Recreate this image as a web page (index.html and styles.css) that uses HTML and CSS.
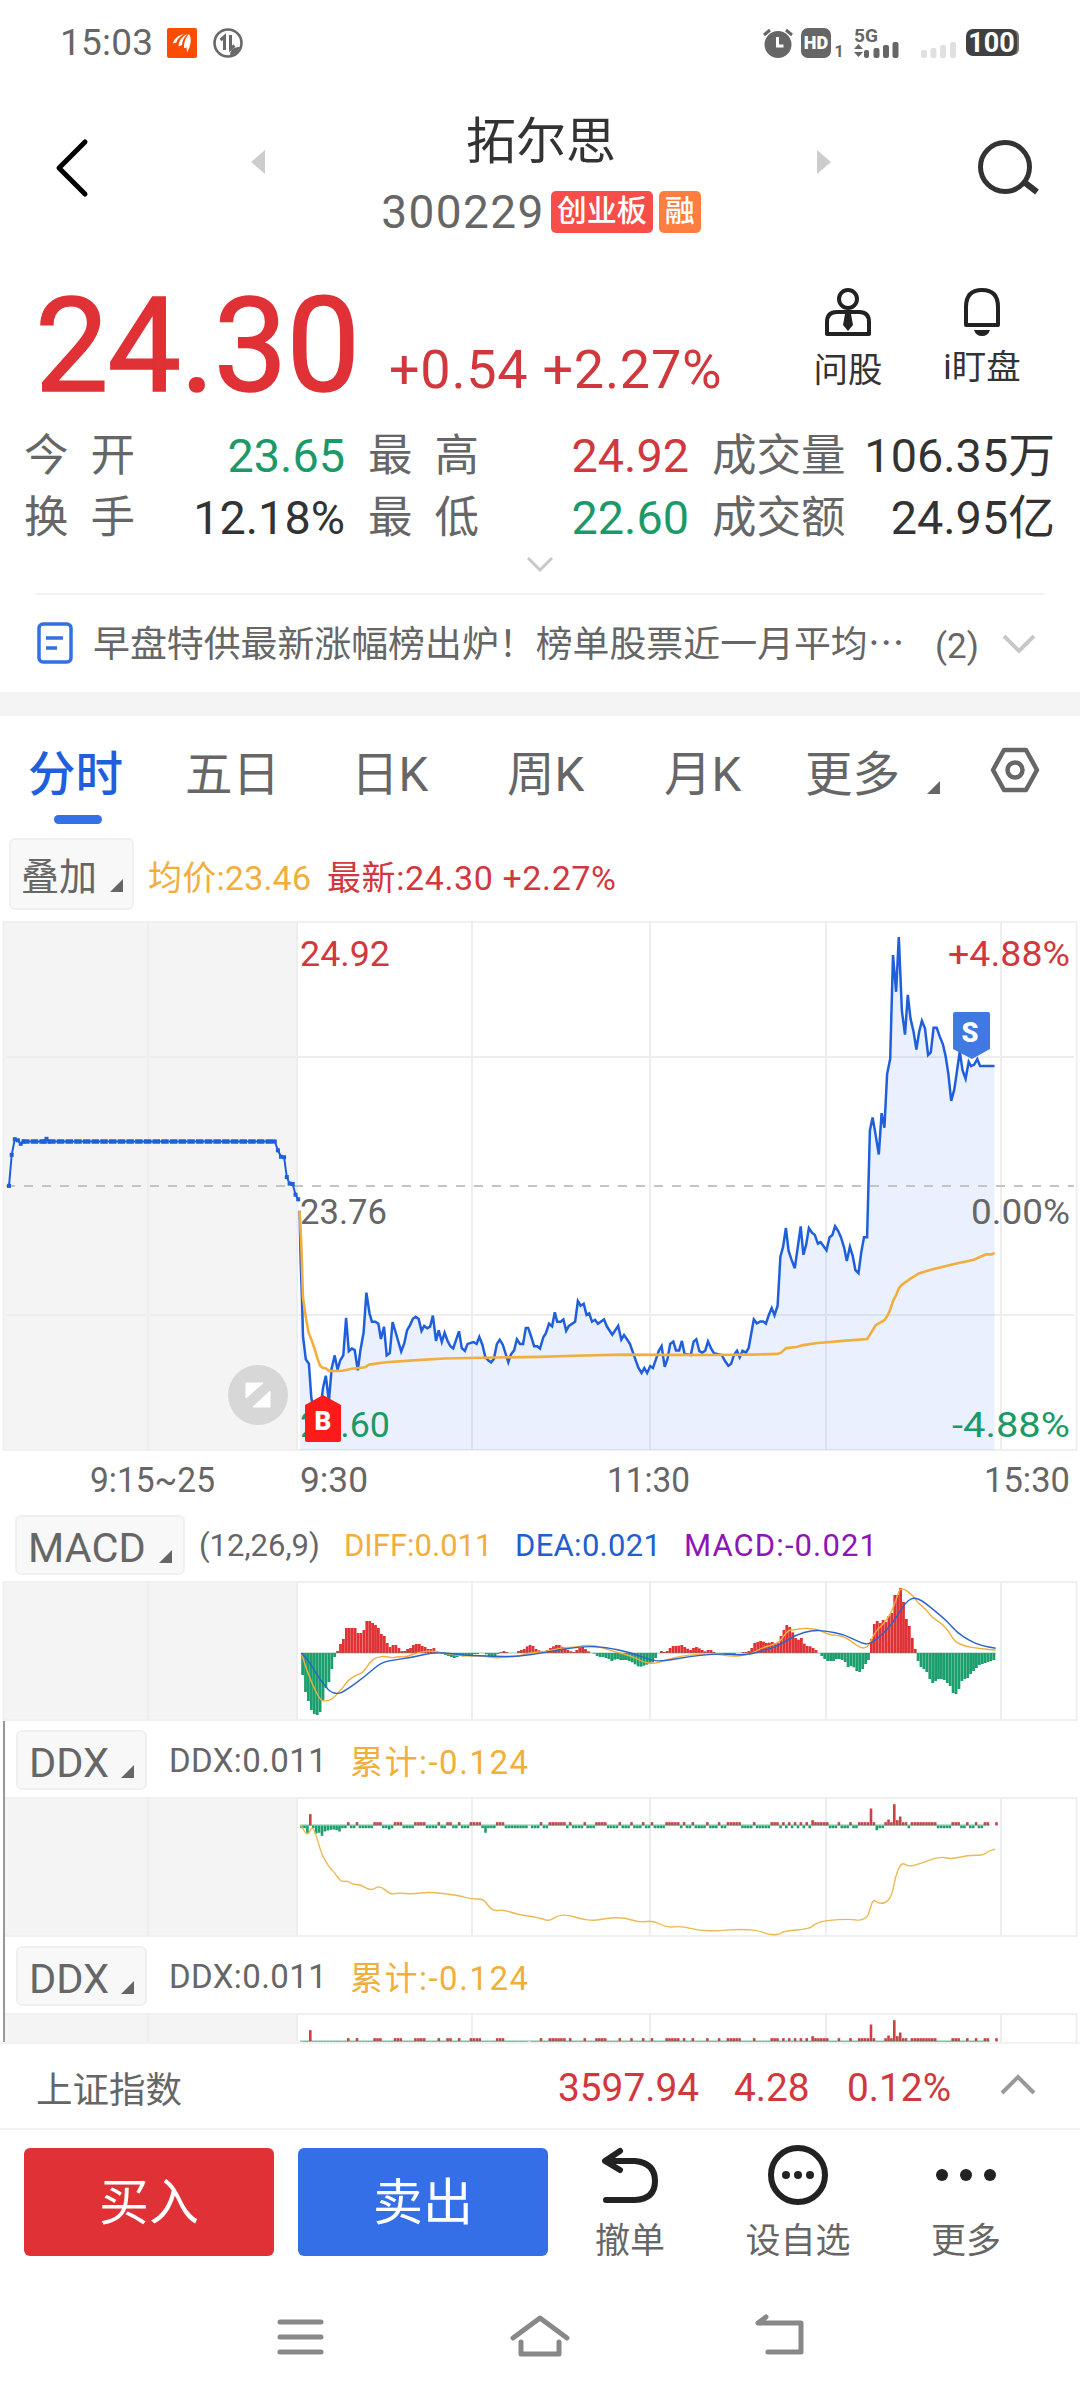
FILE: index.html
```html
<!DOCTYPE html>
<html lang="zh-CN">
<head>
<meta charset="UTF-8">
<title>拓尔思 300229</title>
<link rel="stylesheet" href="styles.css">
</head>
<body>

<div class="status">
  <span class="time">15:03</span>
  <svg class="app" width="30" height="30" viewBox="0 0 30 30"><rect width="30" height="30" rx="2" fill="#fc4c02"/><path d="M6 15.500c1-5 5-8 11-9.500-4 3-7 5-7.500 8.500zM11.500 18.500c0-5 3-10 9-12.500-4 4-5 7-5.500 11zM17 20c0-5 1-10 5-14 3 4 2 12-2 18.500l-.5-5z" fill="#fff"/></svg>
  <svg width="30" height="30" viewBox="0 0 30 30" fill="none" stroke="#686868"><circle cx="15" cy="15" r="13.500" stroke-width="2.600"/><path d="M7.500 12l4-3.500V22M17.500 7v14l4-3.500" stroke-width="3"/><path d="M17 26c1-5 4-7 10-7l-3 5-6 4z" fill="#686868" stroke="none"/></svg>
  <div class="status-r">
    <svg width="30" height="30" viewBox="0 0 30 30"><circle cx="15" cy="16.500" r="13.500" fill="#666"/><path d="M1 7l6-5M29 7l-6-5" stroke="#666" stroke-width="3"/><path d="M14.500 9v9h6" fill="none" stroke="#fff" stroke-width="3"/></svg>
    <span class="hd">HD</span><span class="sim">1</span>
    <svg class="sig" width="46" height="30" viewBox="0 0 46 30" fill="#666"><text x="0" y="14" font-size="19" textLength="24" lengthAdjust="spacingAndGlyphs" font-weight="700">5G</text><path d="M0 21l4.500-5 4.500 5zM0 24l4.500 5 4.500-5z"/><rect x="10" y="22" width="5" height="8" rx="2"/><rect x="19.500" y="20" width="6" height="10" rx="2"/><rect x="29" y="17" width="6" height="13" rx="2"/><rect x="38.500" y="14" width="6" height="16" rx="2"/></svg>
    <svg class="sig2" width="36" height="30" viewBox="0 0 36 30" fill="#e0e0e0"><rect y="22" width="6" height="8" rx="2"/><rect x="9.500" y="20" width="6" height="10" rx="2"/><rect x="19" y="17" width="6" height="13" rx="2"/><rect x="29" y="14" width="6" height="16" rx="2"/></svg>
    <span class="bat">100</span>
  </div>
</div>

<div class="header">
  <svg class="back" width="40" height="60" viewBox="0 0 40 60"><path d="M34 4L8 30l26 26" fill="none" stroke="#000" stroke-width="5" stroke-linecap="round" stroke-linejoin="round"/></svg>
  <i class="tri left"></i>
  <div class="name">
    <h1>拓尔思</h1>
    <div class="code">300229<b class="tag red">创业板</b><b class="tag orange">融</b></div>
  </div>
  <i class="tri right"></i>
  <svg class="search" width="62" height="58" viewBox="0 0 62 58" fill="none" stroke="#333" stroke-width="5"><circle cx="27" cy="28" r="24.500"/><path d="M46 43l13 10" stroke-width="6"/></svg>
</div>

<div class="quote">
  <span class="price">24.30</span>
  <span class="change">+0.54 +2.27%</span>
  <div class="tool ask">
    <svg width="48" height="50" viewBox="0 0 48 50" fill="none" stroke="#222" stroke-width="4"><circle cx="24" cy="12" r="9"/><path d="M3 47V35q0-10 10-10h22q10 0 10 10v12z" stroke-linejoin="round"/><path d="M21 27h6l2 11-5 6-5-6z" fill="#222" stroke="none"/></svg>
    <span>问股</span>
  </div>
  <div class="tool watch">
    <svg width="40" height="50" viewBox="0 0 40 50" fill="none" stroke="#222" stroke-width="4"><path d="M4 38V20C4 8 10 3 20 3s16 5 16 17v18z" stroke-linejoin="round"/><path d="M12 43h16q-2 6-8 6t-8-6z" fill="#222" stroke="none"/></svg>
    <span>i盯盘</span>
  </div>
</div>

<div class="stats">
  <div><label class="wide">今开</label><span class="down">23.65</span></div>
  <div><label class="wide">最高</label><span class="up">24.92</span></div>
  <div><label>成交量</label><span>106.35万</span></div>
  <div><label class="wide">换手</label><span>12.18%</span></div>
  <div><label class="wide">最低</label><span class="down">22.60</span></div>
  <div><label>成交额</label><span>24.95亿</span></div>
</div>
<svg class="expand" width="28" height="18" viewBox="0 0 28 18"><path d="M2 2l12 12L26 2" fill="none" stroke="#c8c8c8" stroke-width="3"/></svg>

<div class="notice">
  <svg width="36" height="42" viewBox="0 0 36 42" fill="none" stroke="#3470e0" stroke-width="3.500"><rect x="2" y="2" width="32" height="38" rx="4"/><path d="M9 16h17M9 26h11"/></svg>
  <span class="news">早盘特供最新涨幅榜出炉！榜单股票近一月平均⋯</span>
  <span class="count">(2)</span>
  <svg width="34" height="22" viewBox="0 0 34 22"><path d="M2 3l15 15L32 3" fill="none" stroke="#c8c8c8" stroke-width="4"/></svg>
</div>

<div class="tabs">
  <span class="active">分时</span>
  <span>五日</span>
  <span>日K</span>
  <span>周K</span>
  <span>月K</span>
  <span>更多</span>
  <i class="corner"></i>
  <svg width="50" height="46" viewBox="0 0 50 46" fill="none" stroke="#666" stroke-width="4.500"><path d="M14 3h22l11 20-11 20H14L3 23z" stroke-linejoin="round"/><circle cx="25" cy="23" r="7.500"/></svg>
</div>

<div class="legend main-legend">
  <button>叠加<i class="corner"></i></button>
  <span class="yellow">均价:23.46</span>
  <span class="up">最新:24.30 +2.27%</span>
</div>
<svg id="price" class="chart" width="1080" height="597" viewBox="0 11 1080 597"></svg>

<div class="legend macd-legend">
  <button>MACD<i class="corner"></i></button>
  <span>(12,26,9)</span>
  <span class="yellow">DIFF:0.011</span>
  <span class="blue">DEA:0.021</span>
  <span class="purple">MACD:-0.021</span>
</div>
<svg id="macd" class="chart" width="1080" height="142" viewBox="0 0 1080 142"></svg>

<div class="ddx-panels">
  <div class="legend ddx-legend">
    <button>DDX<i class="corner"></i></button>
    <span>DDX:0.011</span>
    <span class="yellow">累计:-0.124</span>
  </div>
  <svg class="chart ddx" width="1080" height="142" viewBox="0 0 1080 142"></svg>
  <div class="legend ddx-legend">
    <button>DDX<i class="corner"></i></button>
    <span>DDX:0.011</span>
    <span class="yellow">累计:-0.124</span>
  </div>
  <svg class="chart ddx" width="1080" height="142" viewBox="0 0 1080 142"></svg>
</div>

<div class="index">
  <span class="index-name">上证指数</span>
  <span class="up">3597.94</span>
  <span class="up">4.28</span>
  <span class="up">0.12%</span>
  <svg width="36" height="22" viewBox="0 0 36 22"><path d="M2 20L18 4l16 16" fill="none" stroke="#999" stroke-width="4"/></svg>
</div>

<div class="actions">
  <button class="buy">买入</button>
  <button class="sell">卖出</button>
  <div class="act">
    <svg width="62" height="62" viewBox="0 0 62 62" fill="none" stroke="#222" stroke-width="6" stroke-linecap="round" stroke-linejoin="round"><path d="M21 7L6 17l15 9M7 17h29q20 2 20 20T36 56H7"/></svg>
    <span>撤单</span>
  </div>
  <div class="act">
    <svg width="62" height="62" viewBox="0 0 62 62"><circle cx="31" cy="31" r="27" fill="none" stroke="#222" stroke-width="6"/><g fill="#222"><circle cx="19" cy="31" r="4"/><circle cx="31" cy="31" r="4"/><circle cx="43" cy="31" r="4"/></g></svg>
    <span>设自选</span>
  </div>
  <div class="act">
    <svg width="62" height="62" viewBox="0 0 62 62" fill="#222"><circle cx="7" cy="31" r="6"/><circle cx="31" cy="31" r="6"/><circle cx="55" cy="31" r="6"/></svg>
    <span>更多</span>
  </div>
</div>

<div class="nav">
  <svg width="60" height="46" viewBox="0 0 60 46" stroke="#888" stroke-width="5" stroke-linecap="round"><path d="M10 8h41M10 23h41M10 38h41"/></svg>
  <svg width="60" height="46" viewBox="0 0 60 46" fill="none" stroke="#888" stroke-width="5" stroke-linecap="round" stroke-linejoin="round"><path d="M3 24L30 4l27 20M11 28v12h38V28"/></svg>
  <svg width="60" height="46" viewBox="0 0 60 46" fill="none" stroke="#888" stroke-width="5" stroke-linecap="round" stroke-linejoin="round"><path d="M16 3L8 9h43v29H18"/></svg>
</div>

<script src="chart.js"></script>
</body>
</html>
```
FILE: styles.css
```css
*{box-sizing:border-box}
body{margin:0;width:1080px;height:2400px;overflow:hidden;background:#fff;color:#666;font-family:Roboto,"Noto Sans CJK SC",sans-serif}
svg{display:block;flex:none}
h1,button{margin:0;font-family:inherit;font-weight:400}
.up{color:#d1383d}
.down{color:#1b9a68}
.yellow{color:#f2ae3d}
.blue{color:#1f5fd0}
.purple{color:#8c17b4}

.status{display:flex;align-items:center;height:85px;padding:0 63px 0 60px}
.time{width:107px;font-size:37px;letter-spacing:.2px}
.app{margin-right:16px}
.status-r{display:flex;align-items:center;margin-left:auto}
.hd{width:30px;height:30px;margin-left:8px;border-radius:7px;background:#666;color:#fff;font-size:18px;font-weight:900;line-height:30px;text-align:center}
.sim{align-self:flex-end;width:16px;font-size:16px;font-weight:700;line-height:12px;text-align:center}
.sig{margin-left:7px;overflow:visible}
.sig2{margin-left:21px}
.bat{width:51px;height:27px;margin-left:9px;border-radius:7px;background:#404040;box-shadow:3px 0 0 -1px #777;color:#fff;font-size:27px;font-weight:700;line-height:28px;text-align:center}

.header{display:flex;align-items:flex-start;height:165px}
.back{margin:53px 161px 0 51px}
.tri{width:14px;height:24px;margin-top:65px;border:solid transparent;border-width:12px 0}
.tri.left{margin-left:-1px;border-right:14px solid #ccc}
.tri.right{border-left:14px solid #ccc}
.name{flex:1;text-align:center}
.name h1{margin-top:19px;color:#333;font-size:50px;line-height:76px}
.code{display:flex;align-items:center;justify-content:center;height:64px;font-size:46px;letter-spacing:1.400px}
.tag{height:42px;margin-left:6px;padding:0 6px;border-radius:5px;color:#fff;font-size:30px;font-weight:500;letter-spacing:0;line-height:40px}
.red{background:#f84e49}
.orange{background:#fe7e42}
.search{margin:54px 40px 0 147px}

.quote{display:flex;height:168px}
.price{width:353px;padding-left:35px;color:#e03136;font-size:131px;letter-spacing:-1px;line-height:193px;-webkit-text-stroke:1.500px #e03136}
.change{width:424px;padding-left:36px;color:#d1383d;font-size:54px;letter-spacing:.7px;line-height:240px;white-space:nowrap}
.tool{display:flex;flex-direction:column;align-items:center;padding-top:37px;color:#333;font-size:34.500px;line-height:66px}
.tool.ask{width:142px}
.tool.watch{width:126px}
.tool.watch span{margin-top:-3px}

.stats{display:grid;grid-template-columns:321px 321px 343px;column-gap:23px;row-gap:1px;height:122px;margin-top:8px;padding-left:24px}
.stats div{display:flex;justify-content:space-between;height:60px;color:#333;font-size:46.800px;line-height:60px;white-space:nowrap}
.stats label{color:#666;font-size:44.500px}
.stats .wide{letter-spacing:22px}
.stats .up{color:#d1383d}
.stats .down{color:#1b9a68}
.expand{margin:8px auto 0}

.notice{display:flex;align-items:center;width:1010px;height:99px;margin:19px auto 0;border-top:2px solid #f2f2f2;font-size:36.900px}
.notice svg:first-child{margin:-2px 20px 0 2px}
.news{width:842px;padding-bottom:6px;white-space:nowrap}
.count{width:67px;padding-top:6px;font-size:35px}

.tabs{position:relative;display:flex;align-items:center;height:144px;padding:0 40px 12px 28px;border-top:24px solid #f4f4f4;font-size:47.500px}
.tabs span{width:157px;white-space:nowrap}
.tabs span:nth-child(2){width:166px}
.tabs span:nth-child(3){width:156px}
.tabs span:nth-child(5){width:141px}
.tabs span:nth-child(6){width:122px}
.tabs .active{color:#1f5fdb;font-weight:500}
.tabs .active::after{content:"";position:absolute;left:54px;top:99px;width:48px;height:9px;border-radius:5px;background:#3470e8}
.tabs svg{margin-left:auto}
.corner{width:0;height:0;border-left:13px solid transparent;border-bottom:13px solid #666}
.tabs .corner{margin-top:35px}

.legend{display:flex;align-items:center;white-space:nowrap;font-size:33px}
.legend button{display:flex;justify-content:space-between;align-items:center;height:60px;padding:4px 11px 0;border:2px solid #f0f0f0;border-radius:6px;background:#f8f8f8;color:#666;font-size:41.500px}
.legend .corner{margin-top:19px}
.main-legend{height:75px;padding-left:9px;font-size:34px}
.main-legend button{width:125px;height:72px;margin-right:14px;padding:0 9px 0 10px;font-size:38px}
.main-legend .corner{margin-top:24px}
.main-legend span{padding-top:4px;letter-spacing:.2px}
.main-legend span:nth-child(2){width:179px}
.main-legend .up{letter-spacing:.6px}
.macd-legend{height:72px;padding:2px 0 0 15px;font-size:31px}
.macd-legend button{width:170px;margin-right:14px}
.macd-legend span:nth-child(2){width:145px}
.macd-legend span:nth-child(3){width:171px}
.macd-legend span:nth-child(4){width:169px;letter-spacing:.3px}
.macd-legend .purple{letter-spacing:1.100px}
.ddx-legend{height:74px;padding:2px 0 0 11px}
.ddx-legend button{width:131px;margin-right:22px}
.ddx-legend span:nth-child(2){width:181px;letter-spacing:.4px}
.ddx-legend .yellow{letter-spacing:1.500px}

.chart text{font-size:35px}
.ddx-panels{height:324px;margin:-4px 0 0 3px;padding-top:4px;border-left:2px solid #999;overflow:hidden}
.ddx-panels .chart{margin-left:-5px}

.index{display:flex;align-items:center;height:88px;padding:0 44px 0 36px;border:solid #f2f2f2;border-width:2px 0;font-size:38.800px}
.index span{padding-top:2px}
.index-name{width:522px;font-size:36.500px}
.index .up:nth-child(2){width:176px}
.index .up:nth-child(3){width:113px}
.index svg{margin:-4px 0 0 auto}

.actions{display:flex;height:151px;padding:18px 0 0 24px}
.actions button{width:250px;height:108px;margin-right:24px;border:0;border-radius:6px;color:#fff;font-size:50px;line-height:108px}
.buy{background:#e03137}
.actions .sell{margin-right:-2px;background:#346fe8}
.act{display:flex;flex-direction:column;align-items:center;width:168px;margin-top:-4px;font-size:35px;line-height:62px}
.act span{margin-top:5px}

.nav{display:flex;justify-content:space-between;padding:33px 270px 0}
```
FILE: chart.js
```javascript
const RED='#e03136', GREEN='#1b9f6c', BLUE='#1f5fdb', YELLOW='#f2ae3d';
const cols=[148,297,472,650,826,1001];

const parse=s=>s.trim().split(/\s+/).map(p=>p.split(',').map(Number));
const line=(pts,color,w)=>`<polyline points="${pts.map(p=>p.join()).join(' ')}" fill="none" stroke="${color}" stroke-width="${w}"/>`;
// data points -> px
const fit=(s,sx,sy,dx=0,dy=0)=>parse(s).map(([x,y])=>[+(x/sx+dx).toFixed(1),+(y/sy+dy).toFixed(1)]);

function frame(top,bottom){
  let s=`<rect x="3" y="${top}" width="294" height="${bottom-top}" fill="#f4f4f4"/>`;
  s+=`<rect x="3.5" y="${top}" width="1073" height="${bottom-top}" fill="none" stroke="#f0f0f0" stroke-width="2"/>`;
  cols.forEach(x=>s+=`<path d="M${x} ${top}V${bottom}" stroke="#eee" stroke-width="2"/>`);
  return s;
}

/* ---- price ---- */
const PX=2.904, PY=2.613;
const auction=fit('26,747 34,666 43,625 52,628 60,637 68,631 126,631 135,624 143,631 798,631 807,654 816,671 825,672 833,724 841,741 850,742 858,770 866,782',PX,PY);
const price=fit(`870,812 873,940 877,1040 880,1140 888,1200 897,1212 904,1300 912,1340 920,1370 930,1340 938,1275 946,1243 955,1310 963,1225 972,1190 980,1227 988,1203 997,1190 1005,1092 1013,1179 1022,1172 1030,1176 1039,1229 1047,1175 1056,1130 1064,1026 1073,1080 1080,1102 1090,1102 1099,1107 1106,1147 1115,1115 1123,1190 1132,1184 1140,1103 1149,1130 1165,1180 1174,1158 1182,1125 1190,1112 1199,1094 1207,1089 1216,1095 1224,1126 1232,1113 1241,1119 1249,1115 1257,1086 1266,1152 1274,1124 1283,1155 1291,1131 1300,1153 1308,1166 1316,1172 1333,1127 1341,1171 1350,1178 1358,1160 1375,1155 1384,1160 1392,1142 1401,1162 1409,1193 1417,1202 1426,1208 1434,1200 1443,1160 1451,1149 1460,1162 1476,1208 1484,1187 1493,1177 1501,1148 1510,1160 1519,1160 1527,1118 1534,1118 1543,1142 1551,1166 1560,1166`,PX,PY)
.concat(fit(`0,1172 10,1142 17,1132 26,1107 35,1114 43,1077 50,1102 60,1102 68,1096 76,1126 84,1113 102,1102 110,1048 118,1060 127,1055 135,1084 143,1080 151,1102 160,1097 168,1107 186,1096 194,1114 210,1136 227,1113 236,1149 244,1137 252,1147 261,1160 278,1203 286,1223 295,1236 303,1223 311,1236 320,1218 328,1223 337,1200 345,1178 353,1166 362,1220 370,1200 378,1160 387,1154 395,1177 404,1177 412,1152 420,1186 438,1189 446,1154 454,1148 463,1179 471,1183 480,1177 488,1153 497,1172 505,1184 528,1189 538,1206 547,1217 555,1212 563,1189 572,1178 580,1195 588,1178 598,1183 606,1170 621,1096 630,1106 640,1101 648,1101 656,1107 665,1083 673,1066 681,1085 690,1060 698,932 706,906 714,857 722,917 731,941 740,962 748,910 757,853 765,927 773,900 781,857 790,869 798,875 807,898 815,894 832,915 841,881 849,875 857,852 866,865 874,882 883,908 891,943 900,906 908,930 916,967 925,975 933,920 941,881 950,881 958,602 966,568 975,615 984,665 992,557 1000,595 1008,455 1017,415 1025,144 1034,240 1042,97 1051,290 1060,352 1068,248 1076,310 1085,345 1093,391 1101,345 1109,316 1118,336 1127,405 1135,398 1143,334 1152,334 1161,357 1170,377 1178,408 1186,455 1194,525 1203,495 1210,452 1219,395 1227,445 1236,467 1245,423 1252,434 1261,430 1270,416 1278,434 1320,434`,PX,PY,540));
const avg=fit('870,812 875,900 880,1040 888,1090 896,1130 905,1150 912,1168 921,1195 929,1216 938,1223 947,1224 957,1231 995,1230 1022,1225 1060,1221 1072,1214 1120,1208 1200,1203 1290,1198 1400,1196 1568,1194',PX,PY)
.concat(fit('100,1191 240,1188 500,1189 620,1188 690,1186 700,1183 715,1171 745,1168 765,1163 800,1158 880,1152 950,1147 960,1133 975,1111 1000,1098 1010,1085 1017,1070 1026,1046 1034,1033 1042,1015 1051,1005 1075,990 1100,976 1135,966 1200,952 1260,940 1295,926 1312,926 1320,922',PX,PY,540));

const label=(x,y,t,c,w)=>`<text x="${x}" y="${y}" fill="${c}" textLength="${w}" lengthAdjust="spacingAndGlyphs">${t}</text>`;
let p=frame(22,550);
p+='<path d="M6 157H1074M6 415H1074" stroke="#eee" stroke-width="2"/>';
p+=`<polygon points="300,550 ${price.map(q=>q.join()).join(' ')} 994.5,550" fill="#346fe8" fill-opacity=".1"/>`;
p+='<path d="M6 286H1074" stroke="#c4c4c4" stroke-width="2" stroke-dasharray="9 9"/>';
p+=line(auction,BLUE,2)+`<path d="M22 241.500H275" stroke="${BLUE}" stroke-width="4.500" stroke-dasharray="7.500 1.200"/>`;
auction.forEach(([x,y])=>p+=`<rect x="${x-2}" y="${y-2}" width="4" height="4" fill="${BLUE}"/>`);
p+=label(300,66,'24.92','#d1383d',90)+label(948,66,'+4.88%','#d1383d',122);
p+=label(300,324,'23.76','#666',87)+label(971,324,'0.00%','#666',99);
p+=label(300,537,'22.60','#1b9a68',90)+label(952,537,'-4.88%','#1b9a68',118);
p+=line(price,BLUE,2.5)+line(avg,YELLOW,2.6);
p+=label(90,592,'9:15~25','#666',125)+label(300,592,'9:30','#666',68)+label(607,592,'11:30','#666',83)+label(984,592,'15:30','#666',86);
// full-screen toggle
p+='<circle cx="258" cy="495" r="30" fill="#d7d7d7"/><path d="M246 483h17l-17 15zM270 491v16h-17z" fill="#fff" stroke="#fff" stroke-linejoin="round"/>';
// trade markers
p+='<path d="M305 505l18-10 18 10v35q0 2-2 2h-32q-2 0-2-2z" fill="#fb1b1b"/>';
p+='<text x="323" y="530" text-anchor="middle" fill="#fff" font-weight="900" style="font-size:26px">B</text>';
p+='<path d="M953 114q0-2 2-2h33q2 0 2 2v35l-18 10-19-10z" fill="#4079e2"/>';
p+='<text x="970" y="142" text-anchor="middle" fill="#fff" font-weight="900" style="font-size:27px">S</text>';
document.getElementById('price').innerHTML=p;

/* ---- MACD ---- */
const hist=[-66,-117,-144,-171,-183,-186,-177,-141,-105,-87,-48,-12,6,27,42,75,75,75,75,60,60,69,96,96,90,84,75,57,51,30,18,24,24,15,6,6,12,15,24,27,27,21,18,12,12,15,4,3,-3,-6,-9,-12,-15,-12,-9,-10,-9,-9,-6,-3,-3,0,0,-4,-9,-12,-12,-3,3,6,3,0,0,0,6,9,12,20,24,21,12,8,3,6,9,15,20,24,24,19,15,9,5,3,9,15,18,12,5,0,-2,-9,-12,-12,-15,-18,-24,-20,-18,-21,-21,-21,-24,-28,-34,-40,-41,-38,-35,-32,-28,-15,0,6,3,6,15,21,21,22,24,18,13,9,15,18,14,9,5,9,9,3,0,0,0,-5,-6,-6,-5,0,0,3,3,6,15,30,33,36,34,30,31,33,30,30,51,69,84,78,62,45,40,45,28,21,20,15,9,0,-9,-18,-24,-24,-24,-18,-18,-21,-27,-42,-39,-43,-54,-57,-48,-33,-21,42,87,96,90,99,93,111,120,174,174,195,153,102,81,45,12,-24,-42,-48,-57,-78,-90,-84,-78,-78,-81,-90,-99,-120,-123,-108,-84,-78,-75,-63,-54,-45,-36,-33,-30,-27,-24,-21];
let m=frame(2,140);
hist.forEach((v,i)=>{
  const h=Math.abs(v)/3, x=(301.2+i*2.917).toFixed(1);
  if(v) m+=`<rect x="${x}" y="${v>0?73-h:73}" width="2.8" height="${h}" fill="${v>0?RED:GREEN}"/>`;
});
m+='<path d="M301 73H996" stroke="#1b9f6c" stroke-opacity=".5" stroke-width="1"/>';
const smooth=(pts,c)=>{
  let d=`M${pts[0]}`;
  for(let i=1;i<pts.length-1;i++){
    const [x,y]=pts[i],[a,b]=pts[i+1];
    d+=`Q${x},${y} ${(x+a)/2},${(y+b)/2}`;
  }
  return `<path d="${d}L${pts[pts.length-1]}" fill="none" stroke="${c}" stroke-width="1.4"/>`;
};
m+=smooth(fit('64,279 80,330 100,380 120,418 132,424 155,420 190,382 205,360 230,344 250,338 270,305 290,291 318,289 335,294 352,290 380,291 415,276 460,272 500,282 560,289 610,287 645,295 680,290 715,290 745,278 800,275 850,262 880,263 915,255 950,258 1000,274 1060,290 1090,307 1120,311 1150,303',3,3,280,-20)
.concat(fit('0,288 60,283 110,282 155,290 215,283 240,265 295,250 310,230 325,210 345,210 370,204 400,207 420,210 445,224 490,228 520,248 545,266 565,260 585,215 615,188 635,155 648,120 660,83 680,92 700,108 715,130 740,150 755,172 785,190 805,212 825,246 855,258 880,263 947,271',3,3,680,-20)),YELLOW);
m+=smooth(fit('64,279 85,300 105,335 125,365 150,396 175,402 195,392 250,354 295,314 320,303 400,292 460,277 520,281 560,286 640,289 710,290 800,277 850,267 920,259 975,262 1050,277 1110,300 1145,304',3,3,280,-20)
.concat(fit('0,295 60,285 130,281 170,285 220,282 300,256 345,225 400,210 440,214 490,223 540,247 565,254 590,238 635,195 665,145 685,120 703,113 725,121 765,153 800,182 830,217 870,243 905,257 947,265',3,3,680,-20)),'#2a64c8');
document.getElementById('macd').innerHTML=m;

/* ---- DDX ---- */
const ups=[[503,507],[515,519],[541,553],[571,582],[600,620],[637,641],[646,650],[654,658],[663,667],[684,688],[692,700],[722,733],[785,789],[797,822],[826,830],[848,852],[865,880],[899,903],[916,920],[932,936],[945,949],[968,985],[991,995],[1004,1008],[1024,1031],[1041,1045],[1054,1070],[1073,1077],[1094,1098],[1117,1125],[1128,1132],[1136,1140],[1145,1149],[1153,1157],[1162,1166],[1170,1174],[1179,1204],[1215,1219],[1232,1236],[1247,1270],[1286,1318],[1322,1362],[1381,1393],[1402,1408],[1415,1421],[1428,1435],[1444,1448]];
const tall={3:34,175:16,195:51,201:18,203:64,204:16,205:27,2:-22,5:-24,6:-22,7:-31,8:-18,9:-15,10:-13,11:-12,12:-14,13:-18,63:-22,30:-12,197:-14};
let d=frame(2,140);
for(let i=0;i<239;i++){
  const u=438+i*4.24;
  if((u>766&&u<771)||(u>1436&&u<1444)) continue;
  let v=ups.some(([a,b])=>u>=a-.2&&u<=b+.2)?10:-8;
  if(tall[i]) v=tall[i];
  const h=Math.abs(v)/3;
  d+=`<rect x="${(u/1.452-1.4).toFixed(1)}" y="${v>0?29.5-h:29.5}" width="2.6" height="${h.toFixed(1)}" fill="${v>0?'#cc4044':GREEN}"/>`;
}
d+='<path d="M300 29H990" stroke="#1b9f6c" stroke-opacity=".6" stroke-width="1.2"/>';
d+=smooth(fit('437,136 446,174 453,136 460,170 467,225 480,268 485,275 495,306 505,302 513,314 522,313 539,333 551,315 567,344 578,338 600,343 622,335 665,346 685,358 702,356 710,382 718,393 732,389 750,403 787,415 797,424 810,406 826,405 843,417 863,422 880,415 905,412 930,428 948,421 968,443 990,438 1015,452 1045,452 1075,447 1103,452 1115,464 1132,464 1138,453 1175,447 1183,432 1198,421 1237,417 1248,422 1260,411 1263,388 1268,357 1275,370 1285,370 1295,348 1300,290 1309,246 1319,260 1335,252 1365,229 1381,238 1405,226 1428,226 1435,213 1445,208',1.452,3,0,-16),'#ecb952');
document.querySelectorAll('.ddx').forEach(e=>e.innerHTML=d);
```
